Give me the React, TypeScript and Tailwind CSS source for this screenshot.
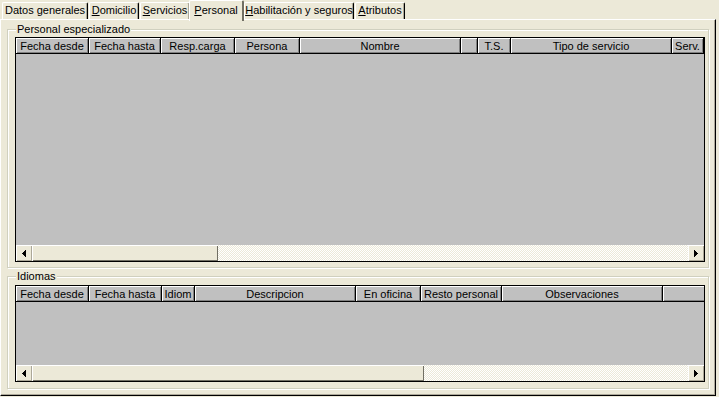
import React from 'react'

type Col = { label: string; w: number }

const personalCols: Col[] = [
  { label: 'Fecha desde', w: 73 },
  { label: 'Fecha hasta', w: 72 },
  { label: 'Resp.carga', w: 74 },
  { label: 'Persona', w: 65 },
  { label: 'Nombre', w: 161 },
  { label: '', w: 17 },
  { label: 'T.S.', w: 33 },
  { label: 'Tipo de servicio', w: 161 },
  { label: 'Serv.', w: 32 },
]

const idiomasCols: Col[] = [
  { label: 'Fecha desde', w: 73 },
  { label: 'Fecha hasta', w: 73 },
  { label: 'Idiom', w: 33 },
  { label: 'Descripcion', w: 161 },
  { label: 'En oficina', w: 65 },
  { label: 'Resto personal', w: 81 },
  { label: 'Observaciones', w: 161 },
  { label: '', w: 60 },
]

function Arrow({ dir }: { dir: 'left' | 'right' }) {
  const rects = [
    { x: 0, y: 3, h: 1 },
    { x: 1, y: 2, h: 3 },
    { x: 2, y: 1, h: 5 },
    { x: 3, y: 0, h: 7 },
  ]
  return (
    <svg width="4" height="7" viewBox="0 0 4 7" shapeRendering="crispEdges">
      {rects.map((r, i) => (
        <rect key={i} x={dir === 'left' ? r.x : 3 - r.x} y={r.y} width="1" height={r.h} fill="#000" />
      ))}
    </svg>
  )
}

function ScrollBar({ thumb }: { thumb: number }) {
  return (
    <div className="flex h-[16px]">
      <div className="w-[16px] h-[16px] flex items-center justify-center bg-[#ECE9D8] shadow-[inset_1px_1px_0_#fff,inset_-1px_-1px_0_#ACA899]">
        <Arrow dir="left" />
      </div>
      <div
        className="h-[16px] bg-[#ECE9D8] shadow-[inset_1px_1px_0_#fff,inset_-1px_-1px_0_#716F64]"
        style={{ width: thumb }}
      />
      <div className="flex-1 h-[16px] bg-[repeating-conic-gradient(#ffffff_0%_25%,#ECE9D8_0%_50%)] bg-[length:2px_2px]" />
      <div className="w-[16px] h-[16px] flex items-center justify-center bg-[#ECE9D8] shadow-[inset_1px_1px_0_#fff,inset_-1px_-1px_0_#ACA899]">
        <Arrow dir="right" />
      </div>
    </div>
  )
}

function Grid({ cols, bodyH, thumb }: { cols: Col[]; bodyH: number; thumb: number }) {
  return (
    <div className="w-[690px] border border-black bg-[#C0C0C0]">
      <div className="flex h-[16px] overflow-hidden border-b border-black">
        {cols.map((c, i) => (
          <div
            key={i}
            className="shrink-0 h-[15px] border-r border-black flex items-center justify-center pt-[2px] shadow-[inset_1px_1px_0_#fff,inset_-1px_-1px_0_#808080] text-[11px] leading-none whitespace-nowrap"
            style={{ width: c.w }}
          >
            {c.label}
          </div>
        ))}
      </div>
      <div style={{ height: bodyH - 1 }} />
      <ScrollBar thumb={thumb} />
    </div>
  )
}

function Group({ title, children, className }: { title: string; children: React.ReactNode; className?: string }) {
  return (
    <div className={`ml-[6px] w-[702px] border border-[#D0D0BF] shadow-[inset_1px_1px_0_#fff,1px_1px_0_#fff] ${className ?? ''}`}>
      <div className="-mt-[7px] ml-[8px] w-fit px-[1px] bg-[#ECE9D8] h-[13px] leading-[13px] text-[11px]">{title}</div>
      {children}
    </div>
  )
}

const tabs = [
  { pre: 'Datos ', key: 'g', post: 'enerales', w: 86, ml: 0 },
  { pre: '', key: 'D', post: 'omicilio', w: 50, ml: 1 },
  { pre: '', key: 'S', post: 'ervicios', w: 50, ml: 1 },
  { pre: '', key: 'P', post: 'ersonal', w: 55, ml: 0, active: true },
  { pre: '', key: 'H', post: 'abilitación y seguros', w: 110, ml: 1 },
  { pre: '', key: 'A', post: 'tributos', w: 50, ml: 1 },
]

export default function App() {
  return (
    <div className="w-[719px] h-[397px] bg-[#ECE9D8] font-['Liberation_Sans',Arial,sans-serif] text-[11px] text-black overflow-hidden">
      <div className="flex items-end h-[19px] pl-[2px] relative z-10">
        {tabs.map((t, i) =>
          t.active ? (
            <div
              key={i}
              className="h-[21px] -mb-[2px] -mx-[1px] bg-[#ECE9D8] border-l border-t border-white border-r-2 border-r-[#716F64] rounded-t-[2px] flex items-start justify-center pt-[3px]"
              style={{ width: t.w, marginLeft: -1 }}
            >
              <span className="leading-[13px]">{t.pre}<u className="underline-offset-1">{t.key}</u>{t.post}</span>
            </div>
          ) : (
            <div
              key={i}
              className="h-[17px] bg-[#ECE9D8] border-l border-t border-white border-r border-r-black shadow-[inset_-1px_0_0_#ACA899] rounded-t-[2px] flex items-center justify-center pb-[1px]"
              style={{ width: t.w, marginLeft: t.ml }}
            >
              <span className="leading-[13px] whitespace-nowrap">{t.pre}<u className="underline-offset-1">{t.key}</u>{t.post}</span>
            </div>
          )
        )}
      </div>
      <div className="w-[716px] h-[377px] border-l border-t border-white border-r border-b border-r-black border-b-black shadow-[inset_-1px_-1px_0_#ACA899] flex flex-col">
        <Group title="Personal especializado" className="mt-[9px]">
          <div className="pl-[7px] mt-[1px] mb-[5px]">
            <Grid cols={personalCols} bodyH={192} thumb={186} />
          </div>
        </Group>
        <Group title="Idiomas" className="mt-[8px]">
          <div className="pl-[7px] mt-[2px] mb-[6px]">
            <Grid cols={idiomasCols} bodyH={64} thumb={392} />
          </div>
        </Group>
      </div>
    </div>
  )
}
